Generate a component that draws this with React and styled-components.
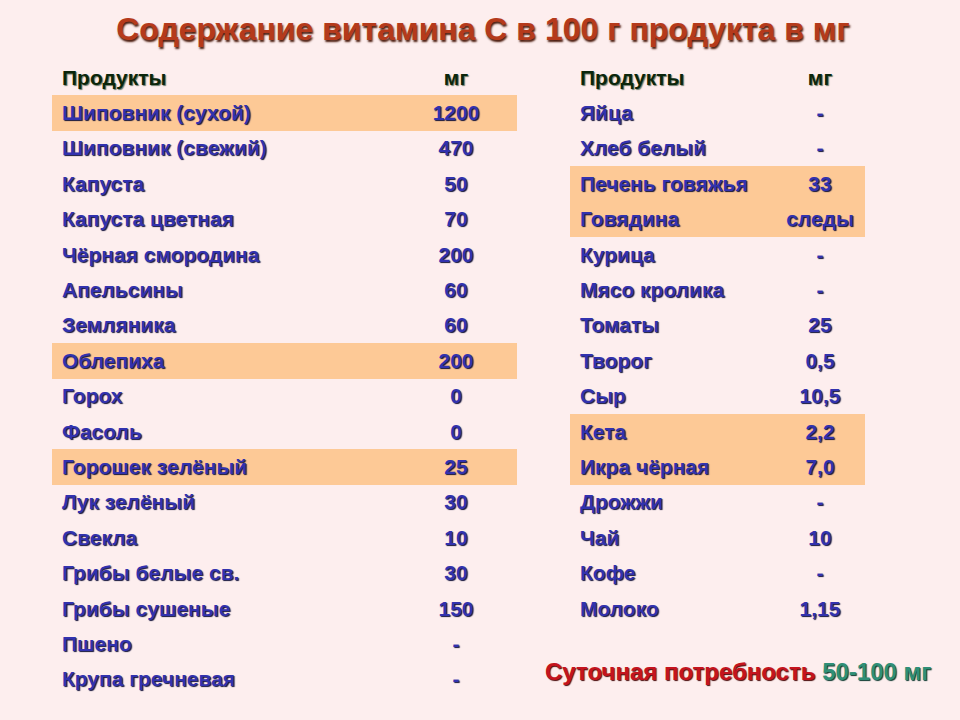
import React from "react";
import styled, { createGlobalStyle } from "styled-components";

const Global = createGlobalStyle`
  html, body {
    margin: 0;
    padding: 0;
    background: #fdeeee;
  }
  body {
    font-family: "Liberation Sans", Arial, sans-serif;
  }
`;

const Page = styled.div`
  width: 960px;
  height: 720px;
  box-sizing: border-box;
  background: #fdeeee;
  overflow: hidden;
`;

const Title = styled.h1`
  margin: 0;
  height: 60px;
  line-height: 58px;
  text-align: center;
  padding-left: 6px;
  font-size: 32px;
  font-weight: bold;
  color: #b53a1b;
  text-shadow: 1px 2px 2px #4a1a0c;
`;

const Columns = styled.div`
  display: flex;
  align-items: flex-start;
  padding-left: 52px;
  gap: 28px;
`;

const Side = styled.div`
  display: flex;
  flex-direction: column;
`;

const Table = styled.div`
  display: grid;
  grid-template-columns: ${(p) => p.$cols};
  margin-left: ${(p) => p.$offset || 0}px;
`;

const Row = styled.div`
  display: contents;
`;

const Cell = styled.div`
  height: 35.4px;
  display: flex;
  align-items: center;
  justify-content: ${(p) => (p.$num ? "center" : "flex-start")};
  padding-left: ${(p) => (p.$num ? 0 : 10)}px;
  font-size: 21px;
  font-weight: bold;
  white-space: nowrap;
  background: ${(p) => (p.$hl ? "#fdc996" : "transparent")};
  color: ${(p) => (p.$head ? "#0b260b" : "#3232ae")};
  text-shadow: ${(p) =>
    p.$head ? "1px 1px 1px #6a7a6a" : "1px 1px 1px #14143c"};
`;

const Note = styled.div`
  margin-top: 32px;
  font-size: 24px;
  font-weight: bold;
  color: #c4141e;
  text-shadow: 1px 1px 1px #4a0a0a;
  white-space: nowrap;
`;

const Accent = styled.span`
  color: #2f8f77;
  text-shadow: 1px 1px 1px #0d3a30;
`;

const left = [
  ["Шиповник (сухой)", "1200", true],
  ["Шиповник (свежий)", "470"],
  ["Капуста", "50"],
  ["Капуста цветная", "70"],
  ["Чёрная смородина", "200"],
  ["Апельсины", "60"],
  ["Земляника", "60"],
  ["Облепиха", "200", true],
  ["Горох", "0"],
  ["Фасоль", "0"],
  ["Горошек зелёный", "25", true],
  ["Лук зелёный", "30"],
  ["Свекла", "10"],
  ["Грибы белые св.", "30"],
  ["Грибы сушеные", "150"],
  ["Пшено", "-"],
  ["Крупа гречневая", "-"],
];

const right = [
  ["Яйца", "-"],
  ["Хлеб белый", "-"],
  ["Печень говяжья", "33", true],
  ["Говядина", "следы", true],
  ["Курица", "-"],
  ["Мясо кролика", "-"],
  ["Томаты", "25"],
  ["Творог", "0,5"],
  ["Сыр", "10,5"],
  ["Кета", "2,2", true],
  ["Икра чёрная", "7,0", true],
  ["Дрожжи", "-"],
  ["Чай", "10"],
  ["Кофе", "-"],
  ["Молоко", "1,15"],
];

function FoodTable({ rows, cols, offset }) {
  return (
    <Table $cols={cols} $offset={offset}>
      <Row>
        <Cell $head>Продукты</Cell>
        <Cell $head $num>мг</Cell>
      </Row>
      {rows.map(([name, mg, hl]) => (
        <Row key={name}>
          <Cell $hl={hl}>{name}</Cell>
          <Cell $hl={hl} $num>{mg}</Cell>
        </Row>
      ))}
    </Table>
  );
}

export default function App() {
  return (
    <Page>
      <Global />
      <Title>Содержание витамина С в 100 г продукта в мг</Title>
      <Columns>
        <Side>
          <FoodTable rows={left} cols="343px 122px" />
        </Side>
        <Side>
          <FoodTable rows={right} cols="205px 90px" offset={25} />
          <Note>
            Суточная потребность <Accent>50-100 мг</Accent>
          </Note>
        </Side>
      </Columns>
    </Page>
  );
}
